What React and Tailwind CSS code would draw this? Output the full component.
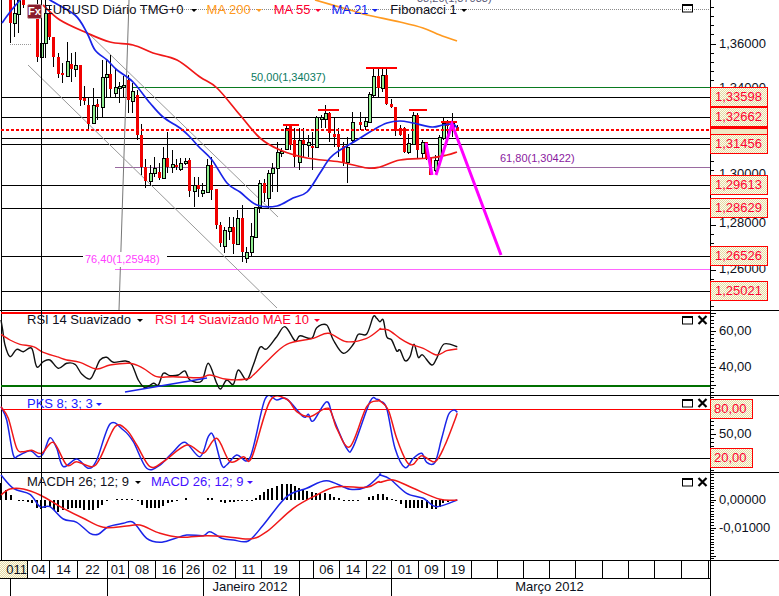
import React from 'react'

// indicator points were read off 3x crops, so convert back to page coords
const fromZoom = (ox, oy, pts) => pts.map(([x, y]) => [ox + x / 3, oy + y / 3])

// catmull-rom through the sampled points, the platform draws these smoothed
const toPath = (pts) => {
  let d = `M${pts[0][0].toFixed(1)} ${pts[0][1].toFixed(1)}`
  for (let i = 0; i < pts.length - 1; i++) {
    const p0 = pts[i - 1] || pts[i]
    const p1 = pts[i]
    const p2 = pts[i + 1]
    const p3 = pts[i + 2] || p2
    const c1x = p1[0] + (p2[0] - p0[0]) / 6
    const c1y = p1[1] + (p2[1] - p0[1]) / 6
    const c2x = p2[0] - (p3[0] - p1[0]) / 6
    const c2y = p2[1] - (p3[1] - p1[1]) / 6
    d += `C${c1x.toFixed(1)} ${c1y.toFixed(1)} ${c2x.toFixed(1)} ${c2y.toFixed(1)} ${p2[0].toFixed(1)} ${p2[1].toFixed(1)}`
  }
  return d
}

// x, wick top, wick bottom, body top, body bottom, colour
const candles = [
  [10, 0, 43, 0, 23, 'r'], [14, 0, 37, 13, 23, 'g'], [18, 0, 33, 0, 14, 'g'], [23, 0, 8, 0, 5, 'r'],
  [37, 0, 62, 10, 57, 'r'], [41, 30, 69, 43, 57, 'g'], [45, 0, 58, 13, 43, 'g'], [49, 5, 40, 13, 37, 'r'],
  [53, 37, 67, 37, 57, 'r'], [58, 53, 78, 57, 74, 'r'], [62, 63, 83, 73, 75, 'r'], [67, 42, 77, 61, 76, 'g'],
  [71, 53, 82, 64, 69, 'r'], [75, 52, 77, 65, 69, 'g'], [80, 65, 106, 65, 100, 'r'], [84, 86, 105, 98, 101, 'r'],
  [88, 98, 129, 105, 124, 'r'], [93, 88, 124, 105, 123, 'g'], [97, 99, 120, 104, 107, 'r'], [102, 60, 118, 77, 107, 'g'],
  [106, 60, 97, 74, 77, 'g'], [110, 55, 98, 74, 89, 'r'], [115, 68, 97, 87, 93, 'g'], [119, 82, 103, 86, 88, 'g'],
  [123, 76, 97, 85, 87, 'g'], [128, 75, 113, 80, 100, 'r'], [132, 83, 113, 91, 101, 'g'], [137, 90, 140, 95, 135, 'r'],
  [141, 124, 175, 135, 167, 'r'], [145, 159, 188, 167, 181, 'r'], [150, 165, 186, 173, 181, 'g'], [154, 157, 177, 168, 173, 'g'],
  [159, 163, 180, 172, 178, 'r'], [163, 147, 178, 158, 178, 'g'], [167, 132, 173, 158, 167, 'r'], [172, 150, 173, 164, 167, 'g'],
  [176, 159, 170, 165, 167, 'r'], [180, 158, 171, 163, 169, 'g'], [185, 158, 165, 161, 163, 'g'], [189, 158, 197, 160, 191, 'r'],
  [194, 177, 207, 185, 191, 'g'], [198, 177, 197, 185, 189, 'r'], [202, 183, 197, 190, 193, 'g'], [207, 159, 193, 165, 192, 'g'],
  [211, 157, 200, 165, 190, 'r'], [216, 189, 229, 189, 225, 'r'], [220, 222, 247, 225, 243, 'r'], [224, 227, 253, 230, 246, 'g'],
  [229, 217, 240, 227, 231, 'g'], [233, 217, 254, 227, 244, 'r'], [237, 210, 245, 218, 244, 'g'], [242, 205, 262, 218, 252, 'r'],
  [246, 247, 263, 252, 258, 'g'], [251, 223, 257, 236, 252, 'g'], [255, 207, 238, 207, 237, 'g'], [259, 180, 213, 183, 207, 'g'],
  [264, 179, 202, 183, 193, 'r'], [268, 170, 209, 173, 198, 'g'], [272, 163, 192, 168, 173, 'g'], [277, 142, 192, 152, 168, 'g'],
  [281, 148, 157, 151, 153, 'g'], [286, 125, 150, 128, 149, 'g'], [290, 125, 150, 126, 145, 'r'], [294, 128, 167, 140, 157, 'r'],
  [299, 128, 170, 140, 162, 'g'], [303, 128, 157, 140, 144, 'r'], [308, 135, 157, 142, 145, 'g'], [312, 132, 170, 146, 148, 'r'],
  [316, 116, 148, 117, 147, 'g'], [321, 115, 128, 117, 119, 'g'], [325, 105, 128, 113, 119, 'g'], [329, 112, 142, 113, 133, 'r'],
  [334, 117, 147, 134, 137, 'r'], [338, 128, 157, 134, 147, 'r'], [343, 142, 166, 146, 162, 'r'], [347, 137, 183, 147, 162, 'g'],
  [352, 112, 143, 122, 140, 'g'], [360, 112, 130, 122, 125, 'r'], [365, 117, 130, 121, 126, 'g'], [369, 92, 123, 94, 122, 'g'],
  [373, 68, 98, 76, 95, 'g'], [378, 68, 97, 76, 88, 'r'], [382, 68, 92, 75, 88, 'g'], [386, 69, 105, 75, 104, 'r'],
  [391, 99, 108, 104, 107, 'r'], [395, 107, 136, 107, 131, 'r'], [400, 125, 136, 128, 135, 'r'], [404, 127, 153, 128, 152, 'r'],
  [408, 134, 154, 143, 152, 'g'], [413, 112, 145, 115, 144, 'g'], [417, 113, 158, 115, 150, 'r'], [422, 140, 158, 142, 153, 'g'],
  [426, 142, 160, 142, 158, 'r'], [430, 157, 175, 157, 175, 'r'], [435, 155, 172, 160, 170, 'g'], [439, 135, 163, 137, 160, 'g'],
  [443, 117, 140, 123, 138, 'g'], [447, 120, 135, 123, 126, 'r'], [452, 113, 137, 123, 127, 'g'], [457, 125, 131, 127, 129, 'r'],
]

const ma21 = [[2, 23], [10, 12], [20, 0], [26, -8], [42, -8], [50, 0], [75, 15], [87, 33], [95, 50], [107, 60], [117, 70], [133, 82], [150, 103], [163, 117], [180, 128], [190, 137], [200, 148], [212, 160], [227, 183], [240, 192], [257, 205], [277, 206], [293, 198], [307, 192], [320, 173], [330, 158], [340, 150], [357, 140], [373, 130], [387, 123], [400, 121], [413, 123], [432, 127], [443, 125], [453, 124], [457, 128]]
const ma55 = [[43, 5], [60, 20], [87, 33], [110, 42], [133, 45], [153, 53], [177, 60], [200, 77], [217, 88], [240, 115], [260, 138], [280, 150], [307, 158], [340, 162], [367, 168], [380, 167], [400, 160], [430, 158], [447, 155], [457, 152]]
const ma200 = [[315, 0], [350, 10], [367, 15], [400, 22], [423, 28], [440, 35], [457, 41]]

const rsiBlack = [
  ...fromZoom(0, 305, [[3, 45], [8, 75], [15, 120], [30, 155], [50, 133], [70, 140], [95, 130], [110, 185], [130, 170], [150, 165], [175, 190], [200, 175], [225, 178], [245, 207], [270, 222], [285, 197], [300, 165], [320, 157], [340, 172], [375, 168], [395, 178], [415, 225], [435, 248], [460, 235], [475, 240], [490, 205], [510, 212], [535, 210], [555, 198], [570, 225], [605, 228], [625, 175], [650, 235], [662, 252], [680, 225], [700, 238], [715, 195], [740, 225], [760, 180], [780, 127], [800, 132], [830, 95], [855, 65], [885, 107], [900, 92], [935, 100], [950, 68], [980, 60], [1000, 105], [1030, 145], [1060, 118], [1075, 88], [1100, 87], [1120, 35], [1130, 40]]),
  ...fromZoom(380, 305, [[0, 50], [10, 45], [20, 95], [35, 105], [50, 138], [60, 135], [75, 167], [90, 155], [102, 118], [115, 157], [128, 150], [155, 180], [170, 160], [192, 117], [232, 125]]),
]
const rsiRed = [
  ...fromZoom(0, 305, [[3, 88], [30, 105], [60, 118], [100, 125], [130, 142], [170, 155], [200, 165], [240, 172], [290, 192], [330, 180], [390, 175], [430, 190], [470, 215], [520, 215], [600, 218], [630, 210], [680, 223], [740, 222], [760, 210], [800, 170], [860, 118], [940, 100], [985, 85], [1040, 110], [1100, 100], [1140, 72]]),
  ...fromZoom(380, 305, [[0, 73], [25, 75], [60, 100], [90, 117], [130, 130], [170, 150], [200, 137], [232, 132]]),
]

const pksBlue = [
  ...fromZoom(0, 305, [[3, 305], [20, 345], [40, 450], [55, 452], [90, 437], [115, 455], [130, 445], [150, 398], [170, 430], [190, 485], [230, 462], [265, 490], [290, 465], [330, 357], [370, 375], [400, 410], [440, 490], [480, 480], [520, 440], [555, 412], [600, 455], [625, 395], [640, 392], [665, 480], [680, 480], [710, 450], [750, 458], [795, 283], [830, 285], [860, 282], [910, 335], [925, 328], [940, 348], [980, 290], [1000, 340], [1040, 430], [1060, 425], [1110, 290], [1130, 283]]),
  ...fromZoom(380, 305, [[0, 288], [20, 310], [45, 430], [75, 488], [100, 460], [125, 445], [140, 472], [165, 472], [185, 400], [205, 330], [222, 315], [232, 322]]),
]
const pksRed = [
  ...fromZoom(0, 305, [[3, 305], [25, 340], [50, 430], [70, 440], [95, 436], [125, 445], [160, 412], [200, 480], [230, 470], [275, 485], [300, 460], [345, 365], [380, 375], [410, 420], [450, 485], [490, 470], [560, 420], [610, 445], [650, 400], [690, 470], [730, 455], [755, 458], [810, 288], [860, 283], [890, 320], [930, 335], [985, 310], [1010, 370], [1050, 425], [1100, 305], [1135, 287]]),
  ...fromZoom(380, 305, [[0, 288], [25, 315], [50, 400], [80, 470], [100, 478], [125, 452], [165, 470], [195, 420], [232, 325]]),
]

const macdBlue = [
  ...fromZoom(0, 465, [[3, 30], [40, 70], [90, 88], [120, 125], [150, 125], [190, 162], [230, 172], [270, 205], [295, 208], [325, 185], [370, 175], [400, 172], [440, 220], [480, 232], [520, 222], [560, 210], [610, 212], [630, 200], [665, 220], [700, 225], [745, 228], [790, 180], [860, 95], [920, 70], [980, 47], [1050, 73], [1100, 65], [1140, 30]]),
  ...fromZoom(380, 465, [[0, 30], [30, 42], [80, 85], [130, 100], [170, 125], [232, 105]]),
]
const macdRed = [
  ...fromZoom(0, 465, [[3, 90], [30, 72], [70, 72], [120, 90], [190, 130], [250, 160], [310, 187], [380, 183], [420, 180], [480, 205], [540, 217], [620, 212], [680, 215], [750, 222], [800, 200], [880, 130], [950, 90], [1010, 65], [1100, 67], [1135, 50]]),
  ...fromZoom(380, 465, [[0, 52], [40, 45], [100, 70], [180, 103], [232, 105]]),
]
// histogram bars: x, end of bar (3x crop values), baseline is 105
const macdBars = [
  ...fromZoom(0, 465, [[3, 55], [18, 75], [33, 90], [57, 108], [70, 108], [85, 112], [97, 115], [110, 128], [123, 132], [135, 130], [150, 125], [162, 135], [175, 140], [190, 135], [203, 132], [215, 130], [228, 128], [240, 130], [253, 135], [268, 135], [280, 135], [293, 130], [307, 120], [320, 108], [350, 101], [365, 101], [380, 101], [395, 101], [415, 108], [427, 120], [440, 130], [452, 130], [465, 130], [478, 128], [490, 122], [505, 115], [517, 110], [530, 108], [558, 100], [625, 98], [635, 100], [662, 110], [675, 115], [690, 112], [702, 110], [715, 108], [727, 108], [740, 108], [755, 107], [767, 98], [780, 90], [793, 80], [805, 72], [817, 68], [832, 62], [845, 57], [860, 56], [872, 58], [885, 63], [897, 68], [910, 73], [922, 78], [935, 82], [947, 85], [960, 85], [975, 85], [990, 88], [1003, 95], [1018, 100], [1032, 108], [1048, 108], [1060, 108], [1075, 107], [1108, 97], [1120, 92], [1135, 88]]),
  ...fromZoom(380, 465, [[10, 88], [22, 95], [37, 101], [48, 108], [62, 118], [77, 128], [90, 128], [102, 130], [115, 130], [127, 130], [140, 130], [155, 132], [167, 132], [180, 125], [190, 115], [205, 110]]),
]

const priceBoxes = [
  ['1,33598', 87], ['1,32662', 107], ['1,31456', 134], ['1,29613', 175], ['1,28629', 198], ['1,26526', 246], ['1,25021', 281],
]

const dateCells = ['011', '04', '14', '22', '01', '08', '16', '26', '02', '11', '19', '', '06', '14', '22', '01', '09', '19', '', '', '', '', '', '', '', '', '', '']

function Line({ pts, color, width = 1.7 }) {
  return <path d={toPath(pts)} fill="none" stroke={color} strokeWidth={width} strokeLinejoin="round" />
}

function HLine({ y, x1 = 1, color = '#000', width = 1, dash }) {
  return <line x1={x1} x2={710} y1={y} y2={y} stroke={color} strokeWidth={width} strokeDasharray={dash} shapeRendering="crispEdges" />
}

function Frame({ top, height, children }) {
  return (
    <svg className="absolute inset-0 block" width={710} height={height} viewBox={`0 ${top} 710 ${height}`}>
      <line x1={1.5} x2={1.5} y1={top} y2={top + height} stroke="#000" shapeRendering="crispEdges" />
      {children}
      <line x1={41.5} x2={41.5} y1={top} y2={top + height} stroke="#000" shapeRendering="crispEdges" />
    </svg>
  )
}

function Ticks({ height, top, major, step, every }) {
  const lines = []
  let i = Math.ceil((top - major) / step)
  for (; major + i * step < top + height; i++) {
    const isMajor = i % every === 0
    lines.push(<line key={i} x1={0} x2={isMajor ? 5 : 3} y1={major + i * step} y2={major + i * step} stroke="#000" />)
  }
  return (
    <svg className="absolute left-0 top-0" width={8} height={height} viewBox={`0 ${top} 8 ${height}`} shapeRendering="crispEdges">
      {lines}
    </svg>
  )
}

function Caret({ className }) {
  return <span className={`inline-block w-0 h-0 border-x-[3px] border-t-[3px] border-x-transparent ${className}`} />
}

function WindowIcons({ top, close = true }) {
  return (
    <svg className="absolute left-[682px]" style={{ top }} width={26} height={10} viewBox="0 0 26 10">
      <rect x={0.5} y={1.5} width={10} height={7.5} fill="none" stroke="#000" />
      <line x1={0.5} x2={10.5} y1={2} y2={2} stroke="#000" strokeWidth={2} />
      {close && <path d="M16.5 1l8 8M24.5 1l-8 8" stroke="#000" strokeWidth={2.2} fill="none" />}
    </svg>
  )
}

function AxisLabel({ top, children }) {
  return <span className="absolute left-[8px] leading-[16px] text-[#0c1020]" style={{ top: top - 8 }}>{children}</span>
}

function PriceBox({ top, children, wide = true }) {
  return (
    <div
      className={`absolute left-[-1px] border border-[#ff0000] h-[20px] leading-[18px] text-[#ff0030] bg-[repeating-conic-gradient(#fffdf0_0_25%,#e2d9a4_0_50%)] bg-[length:2px_2px] ${wide ? 'w-[58px] pl-[4px]' : 'w-[43px] pl-[3px]'}`}
      style={{ top }}
    >
      {children}
    </div>
  )
}

function MainChart() {
  return (
    <div className="flex h-[311px] border-b border-black">
      <div className="relative w-[710px] overflow-hidden">
        <Frame top={0} height={310}>
          <HLine y={9.5} x1={140} color="#8a8a8a" dash="1 1" />
          {[97.5, 117.5, 138.5, 144.5, 185.5, 208.5, 256.5, 291.5].map((y) => <HLine key={y} y={y} />)}
          <HLine y={87.5} x1={133} color="#0a7a20" />
          <HLine y={167.5} x1={115} color="#9a6aa0" />
          <HLine y={269.5} x1={115} color="#ff66ff" />
          <line x1={10} x2={31} y1={44.5} y2={44.5} stroke="#999" strokeDasharray="1 1" />
          <line x1={129} y1={0} x2={119} y2={310} stroke="#777" />
          <line x1={87} y1={32} x2={278} y2={217} stroke="#999" />
          <line x1={28} y1={65} x2={277} y2={308} stroke="#999" />
          {candles.map(([x, hi, lo, top, bottom, c]) => (
            <g key={x} shapeRendering="crispEdges">
              <line x1={x + 0.5} x2={x + 0.5} y1={hi} y2={lo} stroke="#000" />
              {c === 'r' ? (
                <rect x={x - 1} y={top} width={3} height={Math.max(bottom - top, 2)} fill="#f00000" />
              ) : (
                <rect x={x - 1} y={top + 0.5} width={3} height={Math.max(bottom - top, 1)} fill="#90ee90" stroke="#000" />
              )}
            </g>
          ))}
          <Line pts={ma200} color="#ff9a20" />
          <Line pts={ma55} color="#f01818" />
          <Line pts={ma21} color="#1a24e8" />
          <HLine y={130} color="#ff0000" width={2} dash="3 2" />
          {[[283, 299, 125], [318, 339, 110], [366, 397, 68], [409, 427, 110], [441, 457, 122]].map(([a, b, y]) => (
            <line key={a} x1={a} x2={b} y1={y} y2={y} stroke="#ff0000" strokeWidth={y === 122 || y === 125 ? 2 : 1.5} shapeRendering="crispEdges" />
          ))}
          <polyline points="426,143 432,175" fill="none" stroke="#ff00ff" strokeWidth={3} />
          <polyline points="436,175 452,124 501,255" fill="none" stroke="#ff00ff" strokeWidth={3} />
        </Frame>

        <div className="absolute left-[27px] top-[4px] w-[15px] h-[15px] rounded-[2px] bg-[#8a1c2c] border border-[#c89aa0] text-white text-[11px] font-bold leading-[13px] text-center">Fx</div>
        <div className="absolute left-[44px] top-[2px] flex items-center leading-[16px] whitespace-nowrap">
          <span className="text-[#101020]">EURUSD Diário TMG+0</span>
          <Caret className="ml-[7px] border-t-black" />
          <span className="ml-[10px] text-[#ff9a20]">MA 200</span>
          <Caret className="ml-[5px] border-t-[#ff9a20]" />
          <span className="ml-[12px] text-[#ff0030]">MA 55</span>
          <Caret className="ml-[4px] border-t-[#ff0030]" />
          <span className="ml-[11px] text-[#1020f0]">MA 21</span>
          <Caret className="ml-[4px] border-t-[#1020f0]" />
          <span className="ml-[12px] text-[#101020]">Fibonacci 1</span>
          <Caret className="ml-[4px] border-t-black" />
        </div>
        <span className="absolute left-[417px] top-[-8px] text-[11px] leading-[13px] text-[#5a5a78]">38,20(1,37033)</span>
        <span className="absolute left-[251px] top-[71px] text-[11px] leading-[13px] text-[#0a7a60]">50,00(1,34037)</span>
        <span className="absolute left-[500px] top-[152px] text-[11px] leading-[13px] text-[#8a1aa0]">61,80(1,30422)</span>
        <span className="absolute left-[83px] top-[252px] w-[84px] h-[15px] bg-white pl-[2px] text-[11px] leading-[15px] text-[#ff40ff]">76,40(1,25948)</span>
        <WindowIcons top={3} close={false} />
      </div>
      <div className="relative flex-1 border-l border-black">
        <Ticks top={0} height={310} major={44} step={9.06} every={5} />
        <AxisLabel top={44}>1,36000</AxisLabel>
        <AxisLabel top={88}>1,34000</AxisLabel>
        <AxisLabel top={174}>1,30000</AxisLabel>
        <AxisLabel top={223}>1,28000</AxisLabel>
        <AxisLabel top={269}>1,26000</AxisLabel>
        {priceBoxes.map(([label, top]) => <PriceBox key={label} top={top}>{label}</PriceBox>)}
        <div className="absolute left-[-1px] top-[127px] w-[58px] h-[7px] border-x border-t-2 border-[#ff0000] bg-[#efe9c4]" />
      </div>
    </div>
  )
}

function RsiPanel() {
  return (
    <div className="flex h-[85px] border-b border-black">
      <div className="relative w-[710px] overflow-hidden">
        <Frame top={311} height={84}>
          <HLine y={313} color="#ff0000" width={2} />
          <HLine y={386} color="#007000" width={2} />
          <Line pts={rsiBlack} color="#101010" width={1.4} />
          <Line pts={rsiRed} color="#f01818" width={1.4} />
          <line x1={125} y1={392} x2={207} y2={378} stroke="#1a24e8" strokeWidth={1.6} />
        </Frame>
        <div className="absolute left-[27px] top-[1px] flex items-center leading-[16px] whitespace-nowrap">
          <span className="text-[#101020]">RSI 14 Suavizado</span>
          <Caret className="ml-[6px] border-t-black" />
          <span className="ml-[12px] text-[#ff0030]">RSI 14 Suavizado MAE 10</span>
          <Caret className="ml-[5px] border-t-[#ff0030]" />
        </div>
        <WindowIcons top={4} />
      </div>
      <div className="relative flex-1 border-l border-black">
        <Ticks top={311} height={84} major={331} step={3.6} every={5} />
        <AxisLabel top={20}>60,00</AxisLabel>
        <AxisLabel top={56}>40,00</AxisLabel>
      </div>
    </div>
  )
}

function PksPanel() {
  return (
    <div className="flex h-[77px] border-b border-black">
      <div className="relative w-[710px] overflow-hidden">
        <Frame top={396} height={76}>
          <HLine y={409.5} color="#ff0000" />
          <HLine y={458.5} />
          <Line pts={pksBlue} color="#1a24e8" width={1.5} />
          <Line pts={pksRed} color="#f01818" width={1.5} />
        </Frame>
        <div className="absolute left-[27px] top-[0px] flex items-center leading-[16px] whitespace-nowrap">
          <span className="text-[#2020ff]">PKS 8; 3; 3</span>
          <Caret className="ml-[3px] border-t-[#2020ff]" />
        </div>
        <WindowIcons top={2} />
      </div>
      <div className="relative flex-1 border-l border-black">
        <Ticks top={396} height={76} major={434} step={4.1} every={6} />
        <AxisLabel top={38}>50,00</AxisLabel>
        <PriceBox top={3} wide={false}>80,00</PriceBox>
        <PriceBox top={52} wide={false}>20,00</PriceBox>
      </div>
    </div>
  )
}

function MacdPanel() {
  return (
    <div className="flex h-[88px] border-b border-black">
      <div className="relative w-[710px] overflow-hidden">
        <Frame top={473} height={87}>
          {macdBars.map(([x, y]) => (
            <rect key={x} x={Math.round(x) - 1} width={2} y={Math.min(y, 500)} height={Math.max(Math.abs(y - 500), 1)} fill="#000" shapeRendering="crispEdges" />
          ))}
          <Line pts={macdBlue} color="#1a24e8" width={1.5} />
          <Line pts={macdRed} color="#f01818" width={1.5} />
        </Frame>
        <div className="absolute left-[27px] top-[1px] flex items-center leading-[16px] whitespace-nowrap">
          <span className="text-[#101020]">MACDH 26; 12; 9</span>
          <Caret className="ml-[6px] border-t-black" />
          <span className="ml-[10px] text-[#4410ff]">MACD 26; 12; 9</span>
          <Caret className="ml-[4px] border-t-[#4410ff]" />
        </div>
        <WindowIcons top={4} />
      </div>
      <div className="relative flex-1 border-l border-black">
        <Ticks top={473} height={87} major={500} step={2.8} every={10} />
        <AxisLabel top={27}>0,00000</AxisLabel>
        <AxisLabel top={55}>-0,01000</AxisLabel>
      </div>
    </div>
  )
}

function TimeAxis() {
  return (
    <div className="flex h-[36px] border-b border-black">
      <div className="w-[710px] flex flex-col">
        <div className="h-[18px] border-b border-black overflow-hidden grid grid-cols-[28px_22px_28px_30px_21px_27px_27px_21px_32px_26px_38px_14px_26px_27px_25px_27px_26px_27px_26px_26px_26px_26px_27px_26px_26px_27px_27px_2px] leading-[17px] text-center text-[#0c1020]">
          {dateCells.map((label, i) => (
            <div
              key={i}
              className={`border-r border-black last:border-r-0 ${i === 0 ? 'bg-[repeating-conic-gradient(#fffdf0_0_25%,#e2d9a4_0_50%)] bg-[length:2px_2px] text-right' : ''}`}
            >
              {label}
            </div>
          ))}
        </div>
        <div className="flex-1 grid grid-cols-[11px_97px_96px_96px_92px_318px] leading-[16px] text-center text-[#0c1020]">
          <div className="border-r border-black" />
          <div className="border-r border-black" />
          <div className="border-r border-black" />
          <div className="border-r border-black pr-[3px]">Janeiro 2012</div>
          <div className="border-r border-black" />
          <div className="pr-[3px]">Março 2012</div>
        </div>
      </div>
      <div className="flex-1 border-l border-black" />
    </div>
  )
}

export default function App() {
  return (
    <div className="w-[779px] h-[596px] overflow-hidden bg-white text-[13px] font-['Liberation_Sans',Arial,sans-serif]">
      <MainChart />
      <RsiPanel />
      <PksPanel />
      <MacdPanel />
      <TimeAxis />
    </div>
  )
}
